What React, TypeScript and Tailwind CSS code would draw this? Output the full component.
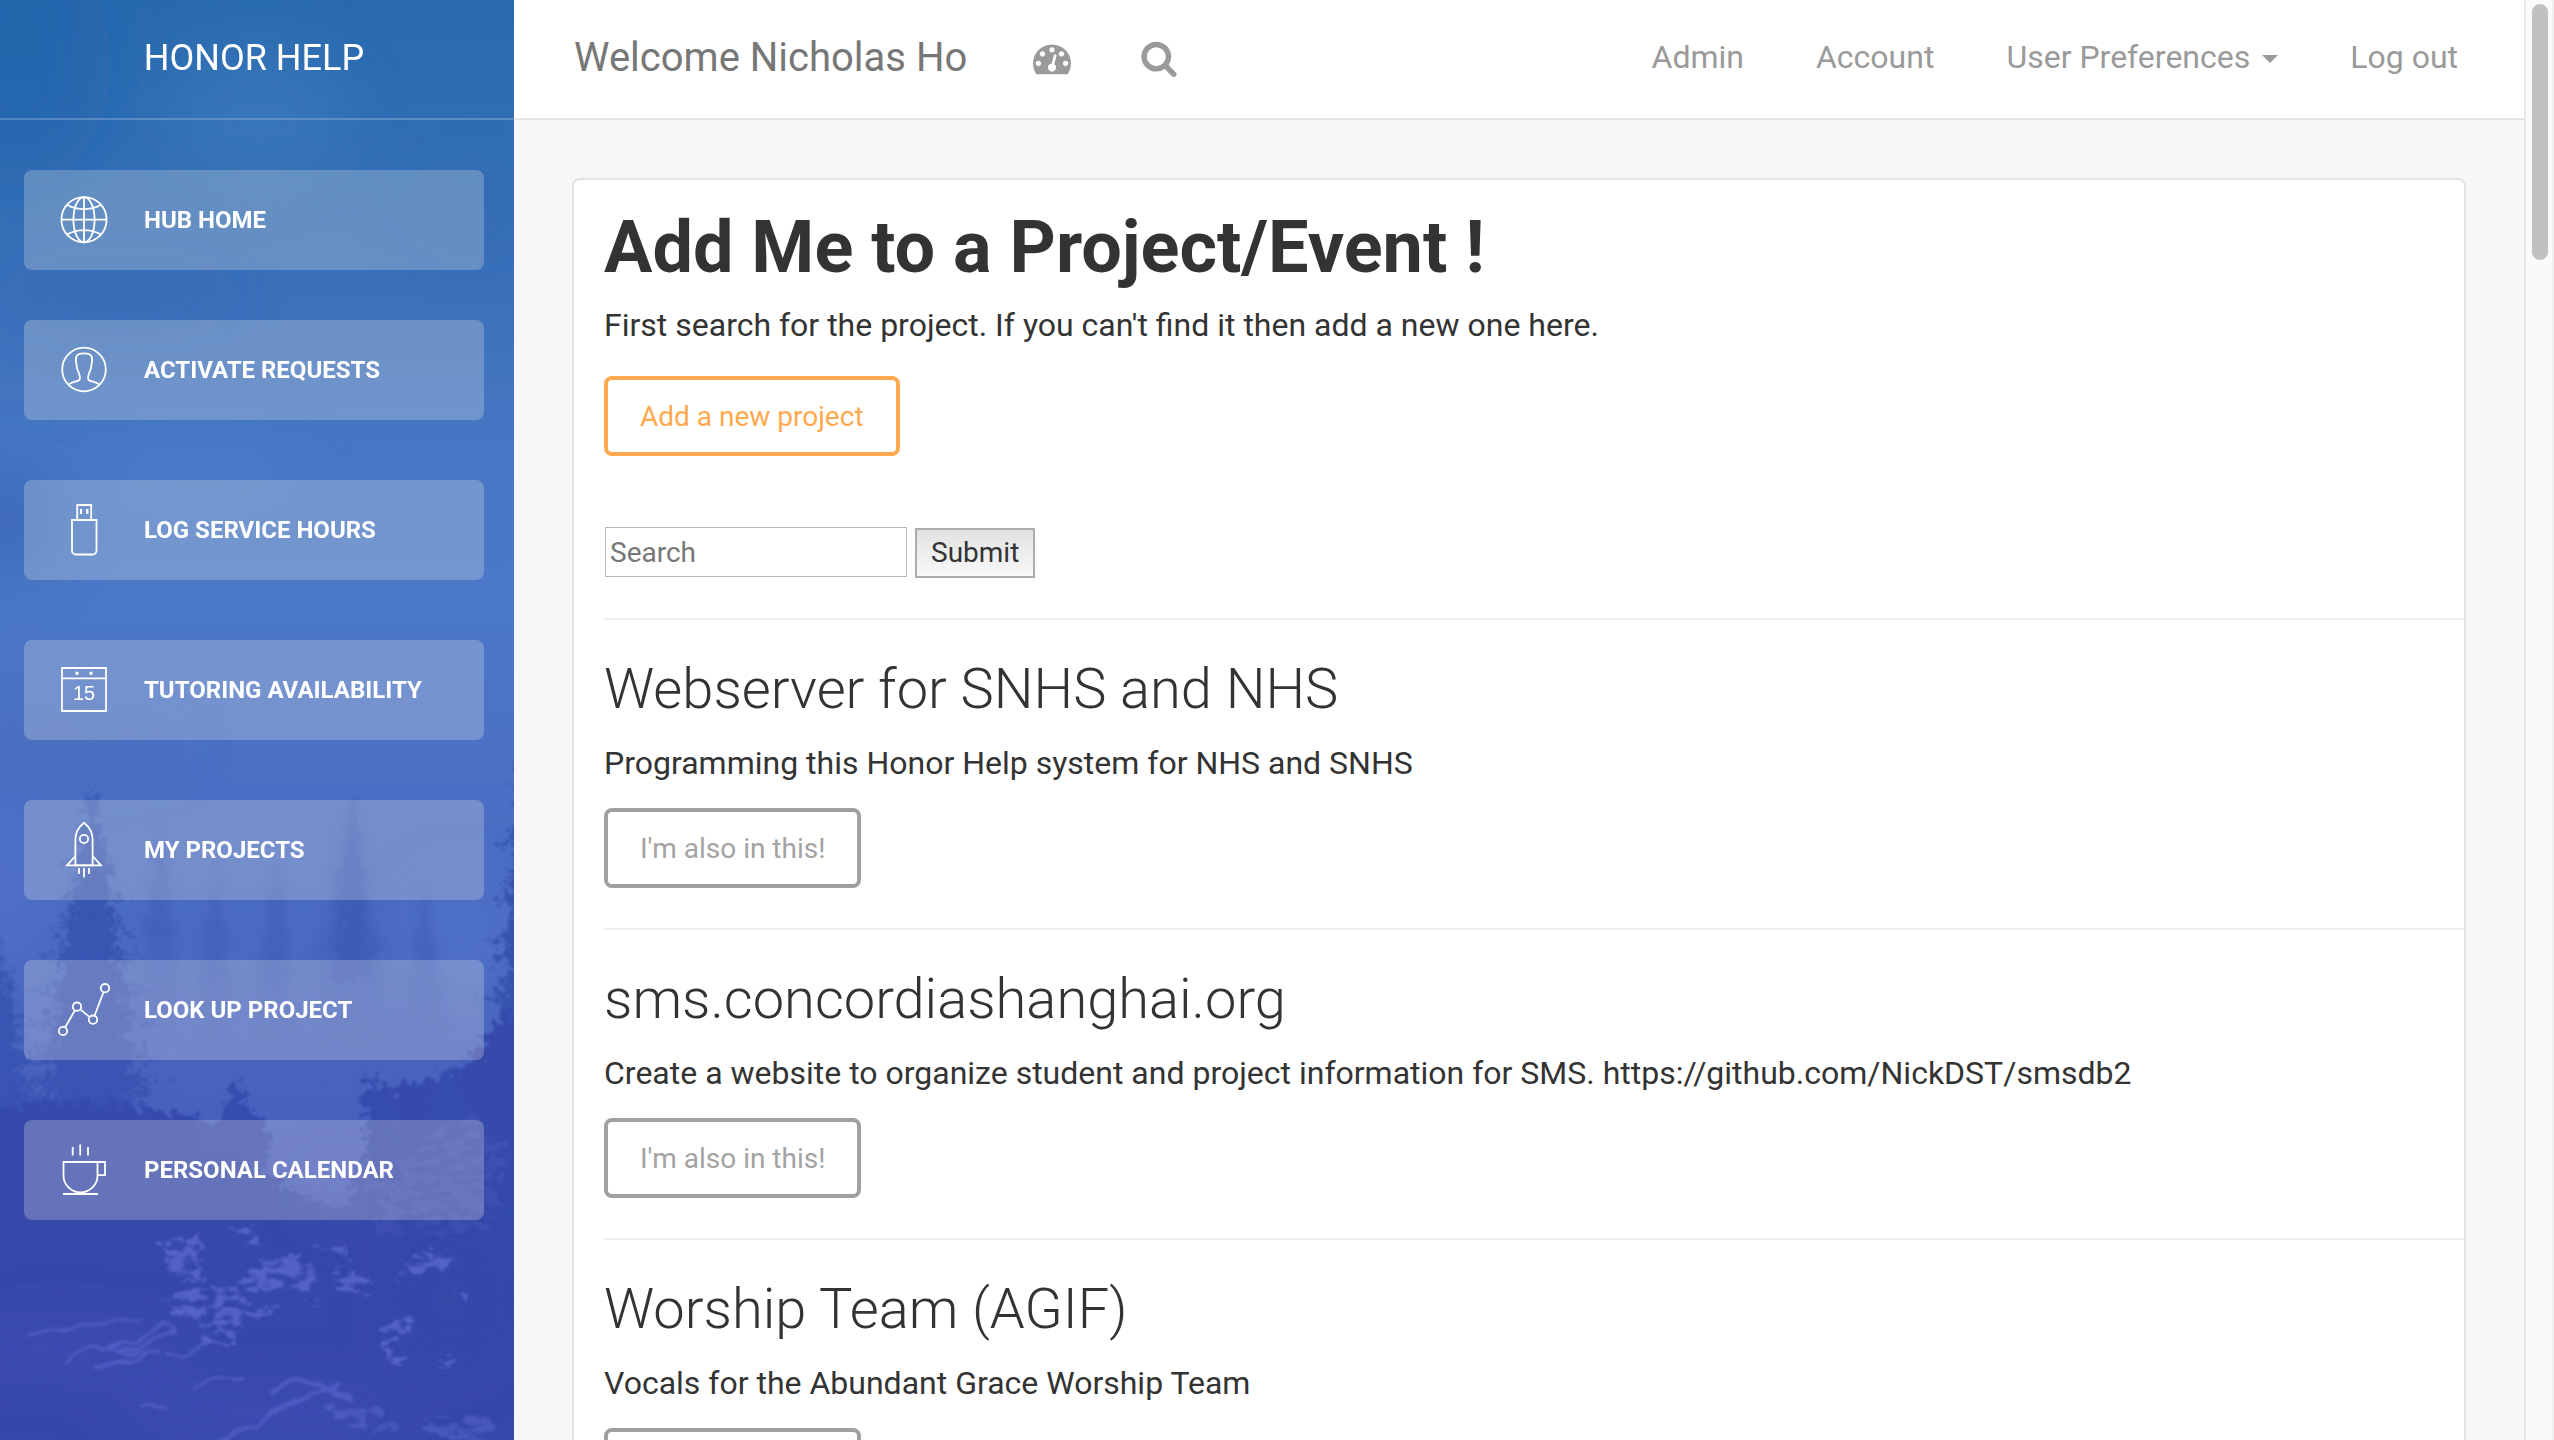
import React from "react";

const stroke = { fill: "none", stroke: "currentColor", strokeWidth: 1.8 } as const;

function Icon({ children }: { children: React.ReactNode }) {
  return (
    <svg viewBox="0 0 60 60" className="h-15 w-15 shrink-0" aria-hidden="true" {...stroke}>
      {children}
    </svg>
  );
}

const GlobeIcon = () => (
  <Icon>
    <circle cx="30" cy="29.7" r="22.6" />
    <ellipse cx="30" cy="29.7" rx="10.6" ry="22.6" />
    <path d="M30 7v45.4M7.4 29.7h45.2M13 15q17 8.4 34 0M13 44.4q17-8.4 34 0" />
  </Icon>
);

const UserIcon = () => (
  <Icon>
    <circle cx="30" cy="29.5" r="21.8" />
    <path d="M15 44.2c3-2.2 8-2.6 10-4 1.400-1 .9-4 .2-6.200-.8-2.500-2.700-5-2.700-9.500-.9-2-.6-5.500-.3-7.500.6-2.700 3.800-3.700 7.800-3.700s7.200 1 7.800 3.700c.3 2 .6 5.500-.3 7.500 0 4.500-1.900 7-2.700 9.500-.7 2.200-1.200 5.200.2 6.200 2 1.400 7 1.800 10 4" />
  </Icon>
);

const UsbIcon = () => (
  <Icon>
    <path d="M18 20h24.500v30.500a4 4 0 0 1-4 4H22a4 4 0 0 1-4-4zM23.200 20V5h14v15" />
    <path d="M27 9v5M33.300 9v5" strokeWidth="2.200" />
  </Icon>
);

const CalendarIcon = () => (
  <Icon>
    <path d="M8 8h44v43H8zM8 18.300h44" />
    <path d="M21.500 13.300h3M35.500 13.300h3" strokeWidth="3" />
    <text
      x="30"
      y="40"
      textAnchor="middle"
      fill="currentColor"
      stroke="none"
      className="font-['Liberation_Sans',sans-serif] text-[20px] font-normal"
    >
      15
    </text>
  </Icon>
);

const RocketIcon = () => (
  <Icon>
    <path d="M30 2.800c5 4 8.600 9.500 8.600 16.500v26H21.400v-26c0-7 3.600-12.500 8.600-16.500z" />
    <circle cx="30" cy="19" r="4.200" />
    <path d="M21.400 36l-8.400 9.300h34L38.600 36M25 48v6M30 48v9.500M35 48v6" />
  </Icon>
);

const GraphIcon = () => (
  <Icon>
    <circle cx="9" cy="51" r="4.200" />
    <circle cx="23" cy="26.700" r="4.200" />
    <circle cx="39" cy="39.700" r="4.200" />
    <circle cx="51" cy="8.200" r="4.200" />
    <path d="M11.200 47.300l9.600-16.800M26.300 29.400l9.400 7.700M40.500 35.800l9-23.600" />
  </Icon>
);

const CupIcon = () => (
  <Icon>
    <path d="M9.500 22h34v13.400a17 17 0 0 1-34 0zM43.500 22H51v13.200h-7.500M9 54h35M18.700 7v8.500M26.200 4.500v11M34 7v8.500" />
  </Icon>
);

const DashboardIcon = () => (
  <svg viewBox="0 0 1792 1792" className="h-[38px] w-[38px]" fill="currentColor" aria-hidden="true">
    <path d="M384 1152q0-53-37.500-90.500t-90.500-37.500-90.500 37.500-37.500 90.500 37.500 90.500 90.500 37.500 90.500-37.500 37.500-90.500zm192-448q0-53-37.500-90.500t-90.500-37.500-90.500 37.500-37.500 90.500 37.500 90.500 90.500 37.500 90.500-37.500 37.500-90.500zm428 481l101-382q6-26-7.500-48.500t-38.500-29.500-48 6.500-30 39.500l-101 382q-60 5-107 43.500t-63 98.500q-20 77 20 146t117 89 146-20 89-117q16-60-6-117t-72-91zm660-33q0-53-37.500-90.500t-90.500-37.500-90.500 37.500-37.500 90.500 37.500 90.500 90.500 37.500 90.500-37.500 37.500-90.500zm-640-640q0-53-37.500-90.500t-90.500-37.500-90.500 37.500-37.500 90.500 37.500 90.500 90.500 37.500 90.500-37.500 37.500-90.500zm448 192q0-53-37.500-90.500t-90.500-37.500-90.500 37.500-37.500 90.500 37.500 90.500 90.500 37.500 90.500-37.500 37.500-90.500zm320 448q0 261-141 483-19 29-54 29h-1402q-35 0-54-29-141-221-141-483 0-182 71-348t191-286 286-191 348-71 348 71 286 191 191 286 71 348z" />
  </svg>
);

const SearchIcon = () => (
  <svg viewBox="0 0 1792 1792" className="h-[38px] w-[38px]" fill="currentColor" aria-hidden="true">
    <path d="M1216 832q0-185-131.500-316.500t-316.500-131.500-316.500 131.500-131.500 316.500 131.500 316.500 316.500 131.500 316.500-131.500 131.500-316.500zm512 832q0 52-38 90t-90 38q-54 0-90-38l-343-342q-179 124-399 124-143 0-273.500-55.500t-225-150-150-225-55.500-273.500 55.500-273.500 150-225 225-150 273.500-55.500 273.500 55.500 225 150 150 225 55.500 273.500q0 220-124 399l343 343q37 37 37 90z" />
  </svg>
);

/* Outline of a conifer: alternating branch tips and notches down both sides. */
function conifer(cx: number, top: number, base: number, half: number, steps: number) {
  const left: string[] = [];
  const right: string[] = [];
  for (let i = 1; i <= steps; i++) {
    const t = i / steps;
    const y = top + (base - top) * t;
    const wobble = 0.75 + 0.25 * Math.sin(i * 2.3 + cx);
    const w = half * Math.pow(t, 0.9) * wobble;
    right.push(`L${cx + w} ${y} L${cx + w * 0.5} ${y - 3}`);
    left.unshift(`L${cx - w * 0.5} ${y - 3} L${cx - w * (1.1 - wobble * 0.1)} ${y}`);
  }
  return `M${cx} ${top} ${right.join(" ")} L${cx} ${base} ${left.join(" ")} Z`;
}

function ForestBackdrop() {
  return (
    <svg
      className="absolute inset-0 h-full w-full"
      viewBox="0 0 514 1440"
      preserveAspectRatio="xMidYMid slice"
      aria-hidden="true"
    >
      <defs>
        <linearGradient id="sky" x1="0" y1="0" x2="0" y2="1">
          <stop offset="0" stopColor="#296aaf" />
          <stop offset="0.1" stopColor="#316eb5" />
          <stop offset="0.2" stopColor="#3b70ba" />
          <stop offset="0.31" stopColor="#4777c4" />
          <stop offset="0.42" stopColor="#4b78c8" />
          <stop offset="0.55" stopColor="#4b6fc4" />
          <stop offset="0.68" stopColor="#4a69c1" />
          <stop offset="0.8" stopColor="#485ebd" />
          <stop offset="1" stopColor="#3a49ad" />
        </linearGradient>
        <linearGradient id="fade" x1="0" y1="0" x2="0" y2="1">
          <stop offset="0" stopColor="#3453ae" stopOpacity="0.5" />
          <stop offset="0.35" stopColor="#3453ae" stopOpacity="0.9" />
          <stop offset="0.6" stopColor="#3450ae" stopOpacity="0.75" />
          <stop offset="1" stopColor="#3650ae" stopOpacity="0.8" />
        </linearGradient>
        <linearGradient id="mist" x1="0" y1="0" x2="0" y2="1">
          <stop offset="0" stopColor="#3a58b4" stopOpacity="0.4" />
          <stop offset="0.45" stopColor="#3a5ab4" stopOpacity="0.55" />
          <stop offset="0.9" stopColor="#3f58b6" stopOpacity="0" />
        </linearGradient>
        <filter id="cloud" x="-50%" y="-50%" width="200%" height="200%">
          <feGaussianBlur stdDeviation="28" />
        </filter>
        <filter id="ragged" x="-20%" y="-10%" width="140%" height="120%" colorInterpolationFilters="sRGB">
          <feTurbulence type="fractalNoise" baseFrequency="0.12" numOctaves="4" seed="4" />
          <feDisplacementMap in="SourceGraphic" scale="32" xChannelSelector="R" yChannelSelector="G" />
          <feGaussianBlur stdDeviation="1" />
        </filter>
        <filter id="soft" x="-20%" y="-20%" width="140%" height="140%" colorInterpolationFilters="sRGB">
          <feTurbulence type="fractalNoise" baseFrequency="0.1" numOctaves="3" seed="9" />
          <feDisplacementMap in="SourceGraphic" scale="24" xChannelSelector="R" yChannelSelector="G" />
          <feGaussianBlur stdDeviation="4" />
        </filter>
        <filter id="snow" x="-20%" y="-20%" width="140%" height="140%" colorInterpolationFilters="sRGB">
          <feTurbulence type="fractalNoise" baseFrequency="0.06 0.12" numOctaves="4" seed="12" result="noise" />
          <feDisplacementMap in="SourceGraphic" in2="noise" scale="24" xChannelSelector="G" yChannelSelector="B" result="shape" />
          <feColorMatrix in="noise" values="0 0 0 0 1  0 0 0 0 1  0 0 0 0 1  7 0 0 0 -2.900" result="speckle" />
          <feComposite in="shape" in2="speckle" operator="in" />
          <feGaussianBlur stdDeviation="1.200" />
        </filter>
        <filter id="stream" x="-20%" y="-20%" width="140%" height="140%" colorInterpolationFilters="sRGB">
          <feTurbulence type="fractalNoise" baseFrequency="0.04" numOctaves="2" seed="3" />
          <feDisplacementMap in="SourceGraphic" scale="14" xChannelSelector="R" yChannelSelector="G" />
          <feGaussianBlur stdDeviation="1.800" />
        </filter>
      </defs>

      <rect width="514" height="1440" fill="url(#sky)" />

      <g filter="url(#cloud)">
        <ellipse cx="260" cy="110" rx="90" ry="70" fill="#4583c2" opacity="0.3" />
        <ellipse cx="20" cy="60" rx="90" ry="130" fill="#1f60a8" opacity="0.4" />
        <ellipse cx="120" cy="295" rx="110" ry="20" fill="#2f66b2" opacity="0.5" />
        <ellipse cx="470" cy="210" rx="60" ry="30" fill="#2d66b0" opacity="0.4" />
        <ellipse cx="0" cy="520" rx="60" ry="60" fill="#3566b4" opacity="0.6" />
        <ellipse cx="200" cy="470" rx="100" ry="24" fill="#5283d0" opacity="0.4" />
        <ellipse cx="60" cy="750" rx="120" ry="20" fill="#4567b8" opacity="0.5" />
        <ellipse cx="0" cy="880" rx="40" ry="80" fill="#5273cc" opacity="0.6" />
        <ellipse cx="460" cy="940" rx="50" ry="60" fill="#5274cb" opacity="0.6" />
      </g>

      <g filter="url(#soft)" fill="url(#mist)">
        <path d={conifer(160, 825, 1080, 50, 18)} />
        <path d={conifer(215, 865, 1080, 44, 16)} />
        <path d={conifer(276, 860, 1090, 56, 18)} />
        <path d={conifer(352, 795, 1110, 92, 24)} />
        <path d={conifer(425, 880, 1090, 50, 14)} />
      </g>

      <g filter="url(#ragged)" fill="url(#fade)">
        <path d={conifer(92, 785, 1130, 100, 30)} />
        <path d={conifer(352, 795, 980, 34, 20)} opacity="0.35" />
        <path d={conifer(0, 940, 1130, 60, 14)} />
      </g>

      <g filter="url(#ragged)">
        <path d={conifer(532, 650, 1160, 80, 26)} fill="#3351ad" opacity="0.9" />
        <path
          d="M-20 1110C40 1100 90 1098 130 1106S196 1112 214 1128s42 42 70 60 50 26 62 14 14-38 24-64 14-50 34-54 48-2 66-26 40-50 70-64V1240H-20V1110z"
          fill="#364aab"
        />
        <path
          d="M366 1130q-4-44 2-58 8 10 10 22l6-18q6 28 16 34l2 40zM428 1110q8-24 12-44l6 20 4-20q8 22 16 26l4 40h-34zM192 1150q2-30 12-26 18-2 22-18 2-20 8-32 6 16 12 32 16 6 20 26 6 16 2 34z"
          fill="#364cac"
        />
      </g>

      <rect y="1215" width="514" height="225" fill="#3748ab" />
      <g filter="url(#cloud)">
        <ellipse cx="340" cy="1195" rx="26" ry="20" fill="#4a5cc0" opacity="0.5" />
        <ellipse cx="60" cy="1350" rx="130" ry="22" fill="#4350ba" opacity="0.6" />
        <ellipse cx="260" cy="1410" rx="150" ry="18" fill="#424fbb" opacity="0.7" />
        <ellipse cx="450" cy="1300" rx="60" ry="70" fill="#3547a8" opacity="0.8" />
      </g>

      <g filter="url(#snow)" fill="#5c6ace" opacity="0.8">
        <path d="M160 1244l40-10 6 10-8 14 6 22-20 2-16-14zM228 1224l24 4 8 14-20-2z" />
        <path d="M240 1284l20-22 28-10 24 12 4 26-24-2-16 4-32 2zM316 1244l30 4 4 10-22-2zM332 1266l26 4 20 16-16 6-28-4z" />
        <path d="M390 1280l22-22 18-10 26 8-14 14-24 4-20 10z" />
        <path d="M160 1300l30-14 44 0 14 18-6 24-10 16-26 4-6-20-24-14z" />
        <path d="M376 1340l18-20 20-2-14 20-20 6zM378 1346l22 4 6 18-16-6zM436 1362l20-4-6 12zM246 1314l38-12-26 18zM298 1304l24-6-10 10zM455 1290l16 4-4 12z" />
        <path d="M360 1180l110-70 40 40-20 80-110 10z" opacity="0.3" />
        <path d="M320 1400l60 10 20 20-60-4zM420 1420l60-10 20 24-60 6z" opacity="0.6" />
      </g>
      <g filter="url(#stream)" fill="none" stroke="#5765cb" strokeLinecap="round" opacity="0.75">
        <path d="M30 1332q60-4 112-16" strokeWidth="3" />
        <path d="M108 1348q34-8 52-22q14-2 12 6q-26 14-56 20" strokeWidth="4" />
        <path d="M66 1362q18-18 44-12l16 4q20-6 36 0" strokeWidth="3" />
        <path d="M96 1368q34-6 50-14" strokeWidth="4" />
        <path d="M192 1388q20-14 50-6" strokeWidth="3" />
        <path d="M220 1440q30-6 46-26 30-12 72-30" strokeWidth="4" />
        <path d="M276 1392q14-14 30-10 26 6 46 18" strokeWidth="5" />
        <path d="M140 1406q12-4 24 2M200 1346q-14 10-30 10" strokeWidth="3" />
      </g>
    </svg>
  );
}

const menu = [
  { label: "HUB HOME", icon: <GlobeIcon />, spacing: "mt-[50px]" },
  { label: "ACTIVATE REQUESTS", icon: <UserIcon />, spacing: "mt-[50px]" },
  { label: "LOG SERVICE HOURS", icon: <UsbIcon />, spacing: "mt-[60px]" },
  { label: "TUTORING AVAILABILITY", icon: <CalendarIcon />, spacing: "mt-[60px]" },
  { label: "MY PROJECTS", icon: <RocketIcon />, spacing: "mt-[60px]" },
  { label: "LOOK UP PROJECT", icon: <GraphIcon />, spacing: "mt-[60px]" },
  { label: "PERSONAL CALENDAR", icon: <CupIcon />, spacing: "mt-[60px]" },
];

const projects = [
  {
    title: "Webserver for SNHS and NHS",
    text: "Programming this Honor Help system for NHS and SNHS",
  },
  {
    title: "sms.concordiashanghai.org",
    text: "Create a website to organize student and project information for SMS. https://github.com/NickDST/smsdb2",
  },
  {
    title: "Worship Team (AGIF)",
    text: "Vocals for the Abundant Grace Worship Team",
  },
];

function Sidebar() {
  return (
    <aside className="relative w-[514px] shrink-0 overflow-hidden bg-[#3c5db8] text-white">
      <ForestBackdrop />
      <div className="relative">
        <div className="flex h-[120px] justify-center border-b-2 border-white/20 pt-[34px] pr-1.5">
          <a href="#" className="text-[36px] leading-[48px]">
            HONOR HELP
          </a>
        </div>
        <nav className="pr-[30px] pl-6">
          <ul>
            {menu.map((item) => (
              <li key={item.label} className={item.spacing}>
                <a
                  href="#"
                  className="flex h-[100px] items-center gap-[30px] rounded-lg bg-[rgba(250,245,235,0.24)] px-[30px] text-[24px] font-bold"
                >
                  {item.icon}
                  {item.label}
                </a>
              </li>
            ))}
          </ul>
        </nav>
      </div>
    </aside>
  );
}

function TopBar() {
  return (
    <header className="flex h-[120px] items-start justify-between border-b-2 border-[#e4e4e4] bg-white pt-8 pr-[66px] pl-[60px] text-[#9a9a9a]">
      <div className="flex items-center">
        <a href="#" className="text-[40px] leading-[52px] text-[#777777]">
          Welcome Nicholas Ho
        </a>
        <a href="#" aria-label="Dashboard" className="ml-[66px]">
          <DashboardIcon />
        </a>
        <a href="#" aria-label="Search" className="ml-[69px]">
          <SearchIcon />
        </a>
      </div>
      <nav className="flex items-center gap-[72px] text-[32px] leading-[50px]">
        <a href="#">Admin</a>
        <a href="#">Account</a>
        <button type="button" className="flex items-center gap-3">
          User Preferences
          <span className="mt-1 border-x-8 border-t-8 border-x-transparent border-t-[#9a9a9a]" />
        </button>
        <a href="#">Log out</a>
      </nav>
    </header>
  );
}

export default function App() {
  return (
    <div className="flex h-screen overflow-hidden bg-[#f7f7f7] font-[Roboto,sans-serif] text-[#333333]">
      <Sidebar />
      <div className="min-w-0 flex-1 overflow-hidden">
        <TopBar />
        <main className="mt-[58px] mr-[58px] ml-[58px] rounded-lg border-2 border-[#e2e2e2] bg-white pt-7 pl-[30px]">
          <h1 className="text-[72px] leading-[80px] font-bold">Add Me to a Project/Event !</h1>
          <p className="mt-3.5 text-[32px] leading-[46px]">
            First search for the project. If you can't find it then add a new one here.
          </p>
          <button
            type="button"
            className="mt-7 block h-20 rounded-lg border-4 border-[#ffa94f] px-8 pt-0.5 text-[28px] text-[#ffa94f]"
          >
            Add a new project
          </button>
          <form className="mt-[71px] flex gap-2" onSubmit={(e) => e.preventDefault()}>
            <input
              type="text"
              aria-label="Search"
              placeholder="Search"
              className="ml-px h-[50px] w-[302px] border border-[#b9b9b9] bg-white px-1 text-[28px] placeholder:text-[#777777]"
            />
            <button
              type="submit"
              className="mt-px h-[50px] border-2 border-[#acacac] bg-linear-to-b from-[#e2e2e2] to-[#f8f8f8] px-3.5 text-[28px] leading-none"
            >
              Submit
            </button>
          </form>
          {projects.map((project) => (
            <section key={project.title} className="mt-10 border-t-2 border-[#eeeeee] pt-[38px]">
              <h2 className="text-[56px] leading-[62px] font-light">{project.title}</h2>
              <p className="mt-5 text-[32px] leading-[46px]">{project.text}</p>
              <button
                type="button"
                className="mt-[22px] block h-20 rounded-lg border-4 border-[#a0a0a0] px-8 pt-0.5 text-[28px] text-[#a3a3a3]"
              >
                I'm also in this!
              </button>
            </section>
          ))}
        </main>
      </div>
      <div className="w-[30px] shrink-0 border-r-2 border-l-2 border-r-[#f0f0f0] border-l-[#e8e8e8] bg-[#fafafa] pt-1 pr-1 pl-1.5">
        <div className="h-64 rounded-full bg-[#c1c1c1]" />
      </div>
    </div>
  );
}
